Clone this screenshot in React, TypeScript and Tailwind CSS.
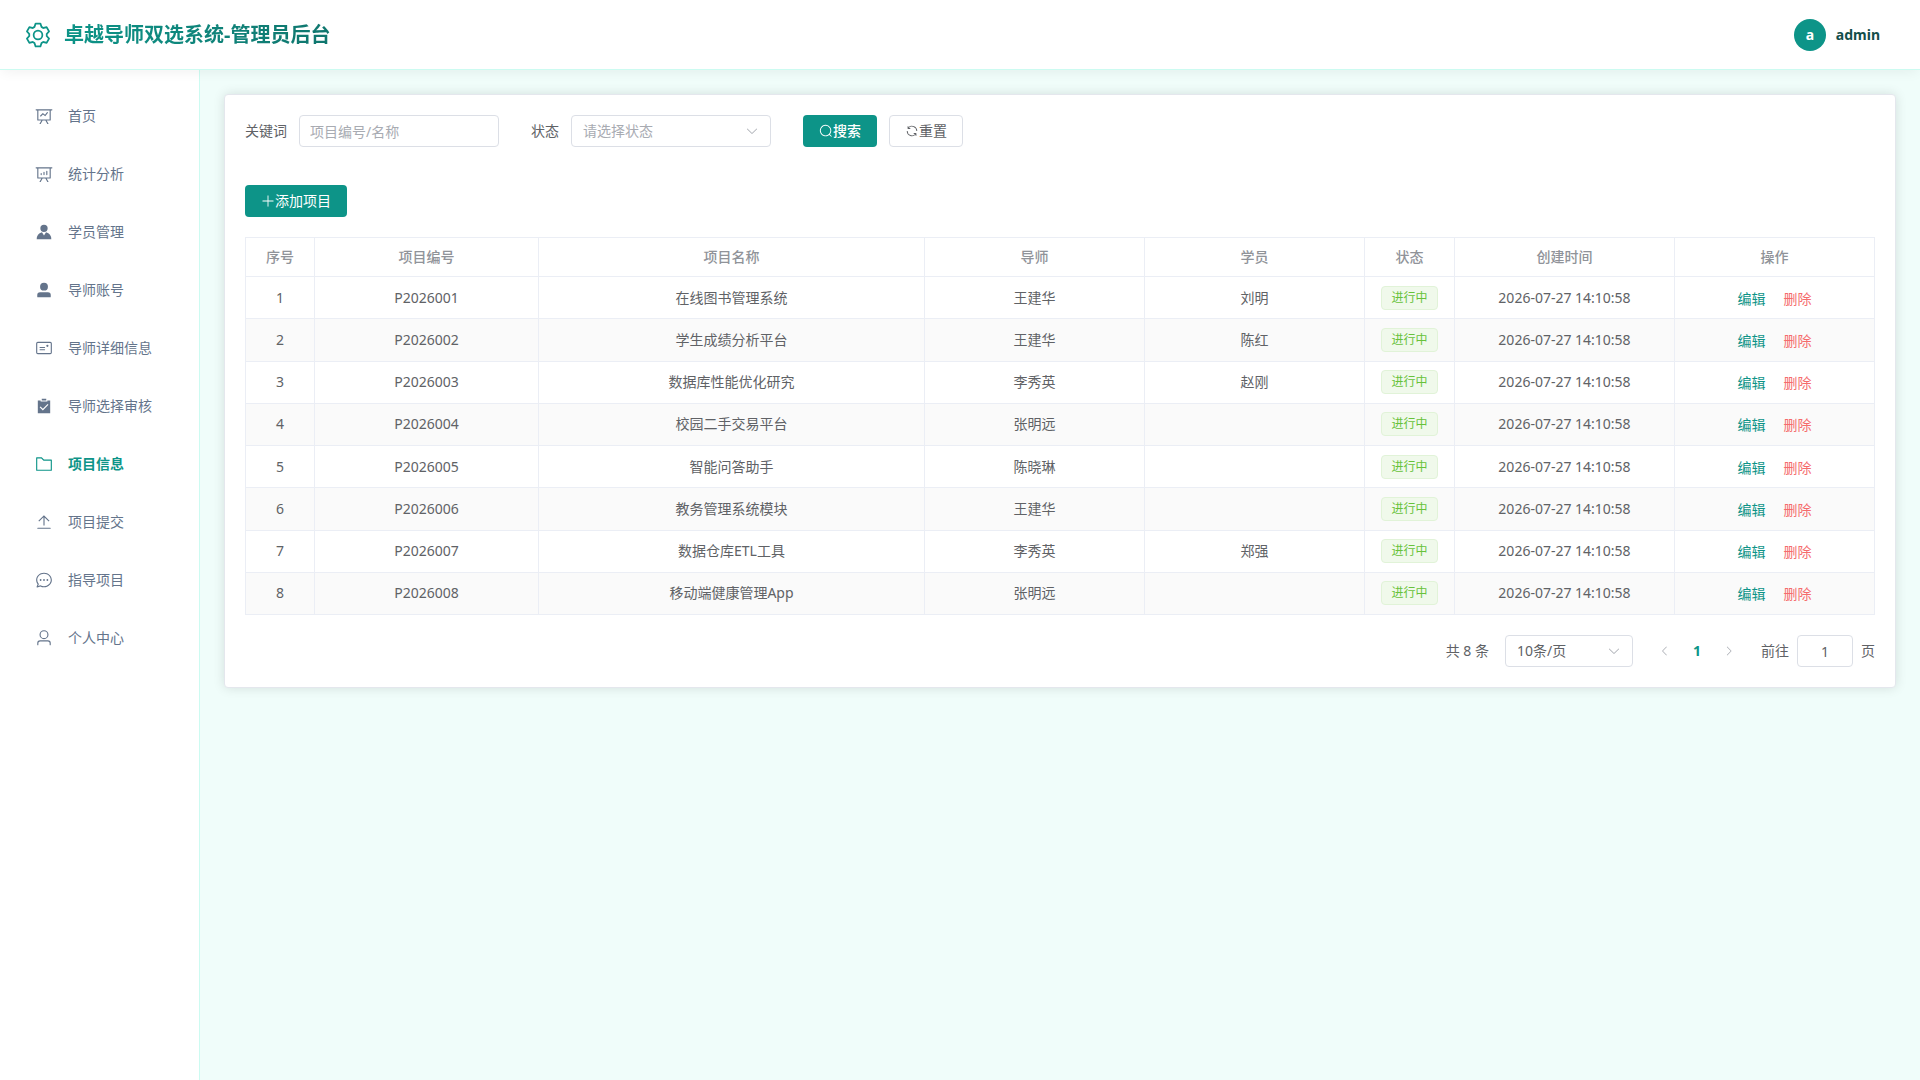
import React, { useState } from 'react';

const icons = {
  setting:
    'M600.704 64a32 32 0 0 1 30.464 22.208l35.2 109.376c14.784 7.232 28.928 15.36 42.432 24.512l112.384-24.192a32 32 0 0 1 34.432 15.36L944.32 364.8a32 32 0 0 1-4.032 37.504l-77.12 85.12a357.12 357.12 0 0 1 0 49.024l77.12 85.248a32 32 0 0 1 4.032 37.504l-88.704 153.6a32 32 0 0 1-34.432 15.296L708.8 803.904c-13.44 9.088-27.648 17.28-42.368 24.512l-35.264 109.376A32 32 0 0 1 600.704 960H423.296a32 32 0 0 1-30.464-22.208L357.696 828.48a351.616 351.616 0 0 1-42.56-24.64l-112.32 24.256a32 32 0 0 1-34.432-15.36L79.68 659.2a32 32 0 0 1 4.032-37.504l77.12-85.248a357.12 357.12 0 0 1 0-48.896l-77.12-85.248A32 32 0 0 1 79.68 364.8l88.704-153.6a32 32 0 0 1 34.432-15.296l112.32 24.256c13.568-9.152 27.776-17.408 42.56-24.64l35.2-109.312A32 32 0 0 1 423.232 64H600.64zm-23.424 64H446.72l-36.352 113.088-24.512 11.968a294.113 294.113 0 0 0-34.816 20.096l-22.656 15.36-116.224-25.088-65.28 113.152 79.68 88.192-1.92 27.136a293.12 293.12 0 0 0 0 40.192l1.92 27.136-79.808 88.192 65.344 113.152 116.224-25.024 22.656 15.296a294.113 294.113 0 0 0 34.816 20.096l24.512 11.968L446.72 896h130.688l36.48-113.152 24.448-11.904a288.282 288.282 0 0 0 34.752-20.096l22.592-15.296 116.288 25.024 65.28-113.152-79.744-88.192 1.92-27.136a293.12 293.12 0 0 0 0-40.256l-1.92-27.136 79.808-88.128-65.344-113.152-116.288 24.96-22.592-15.232a287.616 287.616 0 0 0-34.752-20.096l-24.448-11.904L577.344 128zM512 320a192 192 0 1 1 0 384 192 192 0 0 1 0-384m0 64a128 128 0 1 0 0 256 128 128 0 0 0 0-256',
  dataLine:
    'M359.168 768H160a32 32 0 0 1-32-32V192H64a32 32 0 0 1 0-64h896a32 32 0 1 1 0 64h-64v544a32 32 0 0 1-32 32H665.216l110.848 192h-73.856L591.36 768H433.024L322.176 960H248.32zM832 192H192v512h640zM342.656 534.656a32 32 0 1 1-45.312-45.312L444.992 341.76l125.44 94.08L679.04 300.032a32 32 0 1 1 49.92 39.936L581.632 524.224 451.008 426.24 342.656 534.592z',
  dataAnalysis:
    'm665.216 768 110.848 192h-73.856L591.36 768H433.024L322.176 960H248.32l110.848-192H160a32 32 0 0 1-32-32V192H64a32 32 0 0 1 0-64h896a32 32 0 1 1 0 64h-64v544a32 32 0 0 1-32 32zM832 192H192v512h640zM352 448a32 32 0 0 1 32 32v64a32 32 0 0 1-64 0v-64a32 32 0 0 1 32-32m160-64a32 32 0 0 1 32 32v128a32 32 0 0 1-64 0V416a32 32 0 0 1 32-32m160-64a32 32 0 0 1 32 32v192a32 32 0 1 1-64 0V352a32 32 0 0 1 32-32',
  avatar:
    'M628.736 528.896A416 416 0 0 1 928 928H96a415.872 415.872 0 0 1 299.264-399.104L512 704zM720 304a208 208 0 1 1-416 0 208 208 0 0 1 416 0',
  userFilled:
    'M288 320a224 224 0 1 0 448 0 224 224 0 1 0-448 0m544 608H160a32 32 0 0 1-32-32v-96a160 160 0 0 1 160-160h448a160 160 0 0 1 160 160v96a32 32 0 0 1-32 32z',
  postcard:
    'M160 224a32 32 0 0 0-32 32v512a32 32 0 0 0 32 32h704a32 32 0 0 0 32-32V256a32 32 0 0 0-32-32zm0-64h704a96 96 0 0 1 96 96v512a96 96 0 0 1-96 96H160a96 96 0 0 1-96-96V256a96 96 0 0 1 96-96M704 320a64 64 0 1 1 0 128 64 64 0 0 1 0-128M288 448h256q32 0 32 32t-32 32H288q-32 0-32-32t32-32m0 128h256q32 0 32 32t-32 32H288q-32 0-32-32t32-32',
  checked:
    'M704 192h160v736H160V192h160v64h384zM311.616 537.28l-45.312 45.248L447.36 763.52l316.8-316.8-45.312-45.184L447.36 673.024zM384 192V96h256v96z',
  folder:
    'M128 192v640h768V320H485.76L357.504 192zm-32-64h287.872l128.384 128H928a32 32 0 0 1 32 32v576a32 32 0 0 1-32 32H96a32 32 0 0 1-32-32V160a32 32 0 0 1 32-32',
  upload:
    'M160 832h704a32 32 0 1 1 0 64H160a32 32 0 1 1 0-64m384-578.304V704h-64V247.296L237.248 490.048 192 444.8 508.8 128l316.8 316.8-45.312 45.248z',
  chat:
    'm174.72 855.68 135.296-45.12 23.68 11.84C388.096 849.536 448.576 864 512 864c211.84 0 384-166.784 384-352S723.84 160 512 160 128 326.784 128 512c0 69.12 24.96 139.264 70.848 199.232l22.08 28.8-46.272 115.584zm-45.248 82.56A32 32 0 0 1 89.6 896l58.368-145.92C94.72 680.32 64 596.864 64 512 64 299.904 256 96 512 96s448 203.904 448 416-192 416-448 416a461.056 461.056 0 0 1-206.912-48.384l-175.616 58.56zM512 563.2a51.2 51.2 0 1 1 0-102.4 51.2 51.2 0 0 1 0 102.4m192 0a51.2 51.2 0 1 1 0-102.4 51.2 51.2 0 0 1 0 102.4m-384 0a51.2 51.2 0 1 1 0-102.4 51.2 51.2 0 0 1 0 102.4',
  user:
    'M512 512a192 192 0 1 0 0-384 192 192 0 0 0 0 384m0 64a256 256 0 1 1 0-512 256 256 0 0 1 0 512m320 320v-96a96 96 0 0 0-96-96H288a96 96 0 0 0-96 96v96a32 32 0 1 1-64 0v-96a160 160 0 0 1 160-160h448a160 160 0 0 1 160 160v96a32 32 0 1 1-64 0',
  search:
    'm795.904 750.72 124.992 124.928a32 32 0 0 1-45.248 45.248L750.656 795.904a416 416 0 1 1 45.248-45.248zM480 832a352 352 0 1 0 0-704 352 352 0 0 0 0 704',
  refresh:
    'M771.776 794.88A384 384 0 0 1 128 512h64a320 320 0 0 0 555.712 216.448H654.72a32 32 0 1 1 0-64h149.056a32 32 0 0 1 32 32v148.928a32 32 0 1 1-64 0v-50.56zM276.288 295.616h92.992a32 32 0 0 1 0 64H220.16a32 32 0 0 1-32-32V178.56a32 32 0 0 1 64 0v50.56A384 384 0 0 1 896.128 512h-64a320 320 0 0 0-555.776-216.384z',
  plus:
    'M480 480V128a32 32 0 0 1 64 0v352h352a32 32 0 1 1 0 64H544v352a32 32 0 1 1-64 0V544H128a32 32 0 0 1 0-64z',
  arrowDown:
    'M831.872 340.864 512 652.672 192.128 340.864a30.592 30.592 0 0 0-42.752 0 29.12 29.12 0 0 0 0 41.6L489.664 714.24a32 32 0 0 0 44.672 0l340.288-331.712a29.12 29.12 0 0 0 0-41.728 30.592 30.592 0 0 0-42.752 0z',
  arrowLeft:
    'M609.408 149.376 277.76 489.6a32 32 0 0 0 0 44.672l331.648 340.352a29.12 29.12 0 0 0 41.728 0 30.592 30.592 0 0 0 0-42.752L339.264 511.936l311.872-319.872a30.592 30.592 0 0 0 0-42.688 29.12 29.12 0 0 0-41.728 0z',
  arrowRight:
    'M340.864 149.312a30.592 30.592 0 0 0 0 42.752L652.736 512 340.864 831.872a30.592 30.592 0 0 0 0 42.752 29.12 29.12 0 0 0 41.728 0L714.24 534.336a32 32 0 0 0 0-44.672L382.592 149.376a29.12 29.12 0 0 0-41.728 0z',
};

type IconName = keyof typeof icons;

function Icon({ name, className }: { name: IconName; className: string }) {
  return (
    <svg viewBox="0 0 1024 1024" fill="currentColor" aria-hidden="true" className={`shrink-0 ${className}`}>
      <path d={icons[name]} />
    </svg>
  );
}

const menu: { label: string; icon: IconName }[] = [
  { label: '首页', icon: 'dataLine' },
  { label: '统计分析', icon: 'dataAnalysis' },
  { label: '学员管理', icon: 'avatar' },
  { label: '导师账号', icon: 'userFilled' },
  { label: '导师详细信息', icon: 'postcard' },
  { label: '导师选择审核', icon: 'checked' },
  { label: '项目信息', icon: 'folder' },
  { label: '项目提交', icon: 'upload' },
  { label: '指导项目', icon: 'chat' },
  { label: '个人中心', icon: 'user' },
];

const columns = [
  { title: '序号', width: 'w-[69px]' },
  { title: '项目编号', width: 'w-[224px]' },
  { title: '项目名称', width: '' },
  { title: '导师', width: 'w-[220px]' },
  { title: '学员', width: 'w-[220px]' },
  { title: '状态', width: 'w-[90px]' },
  { title: '创建时间', width: 'w-[220px]' },
  { title: '操作', width: 'w-[200px]' },
];

const projects = [
  { code: 'P2026001', name: '在线图书管理系统', teacher: '王建华', student: '刘明' },
  { code: 'P2026002', name: '学生成绩分析平台', teacher: '王建华', student: '陈红' },
  { code: 'P2026003', name: '数据库性能优化研究', teacher: '李秀英', student: '赵刚' },
  { code: 'P2026004', name: '校园二手交易平台', teacher: '张明远', student: '' },
  { code: 'P2026005', name: '智能问答助手', teacher: '陈晓琳', student: '' },
  { code: 'P2026006', name: '教务管理系统模块', teacher: '王建华', student: '' },
  { code: 'P2026007', name: '数据仓库ETL工具', teacher: '李秀英', student: '郑强' },
  { code: 'P2026008', name: '移动端健康管理App', teacher: '张明远', student: '' },
];

const cell = 'border-r border-b border-[#ebeef5] px-3';

function App() {
  const [keyword, setKeyword] = useState('');
  const [status, setStatus] = useState('');
  const [active, setActive] = useState('项目信息');
  const [page, setPage] = useState('1');

  const reset = () => {
    setKeyword('');
    setStatus('');
  };

  return (
    <div className="flex min-h-screen flex-col bg-[#f0fdfa] font-['Noto_Sans','Noto_Sans_CJK_SC',sans-serif] text-sm text-[#606266]">
      {/* Header */}
      <header className="z-10 flex h-[70px] items-center justify-between border-b border-[#ccfbf1] bg-white pr-10 pl-6 shadow-[0_4px_12px_-2px_rgba(0,0,0,0.06)]">
        <div className="flex items-center gap-3">
          <Icon name="setting" className="size-7 text-[#0d9488]" />
          <h1 className="bg-gradient-to-r from-[#0d9488] to-[#0f766e] bg-clip-text text-xl font-bold text-transparent">
            卓越导师双选系统-管理员后台
          </h1>
        </div>
        <div className="flex items-center gap-2.5 font-bold">
          <span className="flex size-8 items-center justify-center rounded-full bg-[#0d9488] text-white">a</span>
          <span className="text-[#134e4a]">admin</span>
        </div>
      </header>

      <div className="flex flex-1">
        {/* Sidebar */}
        <aside className="w-[200px] shrink-0 border-r border-[#ccfbf1] bg-white pt-5">
          <nav className="flex flex-col gap-1.5">
            {menu.map((item) => (
              <a
                key={item.label}
                href="#"
                onClick={() => setActive(item.label)}
                className={`flex h-13 items-center gap-[15px] pl-[35px] hover:text-[#0d9488] ${
                  active === item.label ? 'font-bold text-[#0d9488]' : 'text-[#64748b]'
                }`}
              >
                <Icon name={item.icon} className="size-[18px]" />
                {item.label}
              </a>
            ))}
          </nav>
        </aside>

        {/* Content */}
        <main className="min-w-0 flex-1 p-6">
          <div className="rounded border border-[#e4e7ed] bg-white p-5 shadow-[0_0_12px_rgba(0,0,0,0.12)]">
            <form className="flex items-center gap-8" onSubmit={(e) => e.preventDefault()}>
              <div className="flex items-center gap-3">
                <label htmlFor="keyword">关键词</label>
                <input
                  id="keyword"
                  value={keyword}
                  onChange={(e) => setKeyword(e.target.value)}
                  placeholder="项目编号/名称"
                  className="h-8 w-[200px] rounded border border-[#dcdfe6] px-2.5 outline-none placeholder:text-[#a8abb2] focus:border-[#0d9488]"
                />
              </div>
              <div className="flex items-center gap-3">
                <label htmlFor="status">状态</label>
                <div className="relative">
                  <select
                    id="status"
                    value={status}
                    onChange={(e) => setStatus(e.target.value)}
                    className={`h-8 w-[200px] appearance-none rounded border border-[#dcdfe6] bg-white px-[11px] outline-none focus:border-[#0d9488] ${
                      status ? '' : 'text-[#a8abb2]'
                    }`}
                  >
                    <option value="">请选择状态</option>
                    <option value="doing">进行中</option>
                  </select>
                  <Icon name="arrowDown" className="pointer-events-none absolute top-[9px] right-3 size-3.5 text-[#a8abb2]" />
                </div>
              </div>
              <div className="flex gap-3">
                <button type="submit" className="flex h-8 items-center rounded bg-[#0d9488] px-4 font-medium text-white hover:bg-[#14b8a6]">
                  <Icon name="search" className="size-3.5" />
                  搜索
                </button>
                <button
                  type="button"
                  onClick={reset}
                  className="flex h-8 items-center rounded border border-[#dcdfe6] px-[15px] hover:border-[#0d9488] hover:text-[#0d9488]"
                >
                  <Icon name="refresh" className="size-3.5" />
                  重置
                </button>
              </div>
            </form>

            <button type="button" className="mt-[38px] flex h-8 items-center rounded bg-[#0d9488] px-4 text-white hover:bg-[#14b8a6]">
              <Icon name="plus" className="size-3.5" />
              添加项目
            </button>

            <table className="mt-5 h-[378px] w-full table-fixed border-separate border-spacing-0 border-t border-l border-[#ebeef5] text-center">
              <thead className="text-[#909399]">
                <tr className="h-[39px]">
                  {columns.map((col) => (
                    <th key={col.title} className={`${cell} ${col.width} font-medium`}>
                      {col.title}
                    </th>
                  ))}
                </tr>
              </thead>
              <tbody>
                {projects.map((project, index) => (
                  <tr key={project.code} className="even:bg-[#fafafa]">
                    <td className={cell}>{index + 1}</td>
                    <td className={cell}>{project.code}</td>
                    <td className={cell}>{project.name}</td>
                    <td className={cell}>{project.teacher}</td>
                    <td className={cell}>{project.student}</td>
                    <td className={cell}>
                      <div className="flex justify-center">
                        <span className="flex h-6 shrink-0 items-center rounded border border-[#e1f3d8] bg-[#f0f9eb] px-[9px] text-xs text-[#67c23a]">
                          进行中
                        </span>
                      </div>
                    </td>
                    <td className={cell}>2026-07-27 14:10:58</td>
                    <td className={cell}>
                      <div className="flex justify-center gap-[18px] pt-0.5">
                        <button type="button" className="text-[#0d9488]">编辑</button>
                        <button type="button" className="text-[#f56c6c]">删除</button>
                      </div>
                    </td>
                  </tr>
                ))}
              </tbody>
            </table>

            {/* Pagination */}
            <div className="mt-5 flex items-center justify-end">
              <span className="mr-4">共 8 条</span>
              <div className="relative mr-4">
                <select
                  aria-label="每页条数"
                  className="h-8 w-32 appearance-none rounded border border-[#dcdfe6] bg-white px-[11px] outline-none focus:border-[#0d9488]"
                >
                  <option>10条/页</option>
                  <option>20条/页</option>
                </select>
                <Icon name="arrowDown" className="pointer-events-none absolute top-[9px] right-3 size-3.5 text-[#a8abb2]" />
              </div>
              <button type="button" disabled aria-label="上一页" className="flex size-8 items-center justify-center text-[#a8abb2]">
                <Icon name="arrowLeft" className="size-3" />
              </button>
              <button type="button" className="size-8 font-bold text-[#0d9488]">1</button>
              <button type="button" disabled aria-label="下一页" className="flex size-8 items-center justify-center text-[#a8abb2]">
                <Icon name="arrowRight" className="size-3" />
              </button>
              <label htmlFor="page" className="mr-2 ml-4">前往</label>
              <input
                id="page"
                value={page}
                onChange={(e) => setPage(e.target.value)}
                className="h-8 w-14 rounded border border-[#dcdfe6] text-center outline-none focus:border-[#0d9488]"
              />
              <span className="ml-2">页</span>
            </div>
          </div>
        </main>
      </div>
    </div>
  );
}

export default App;
